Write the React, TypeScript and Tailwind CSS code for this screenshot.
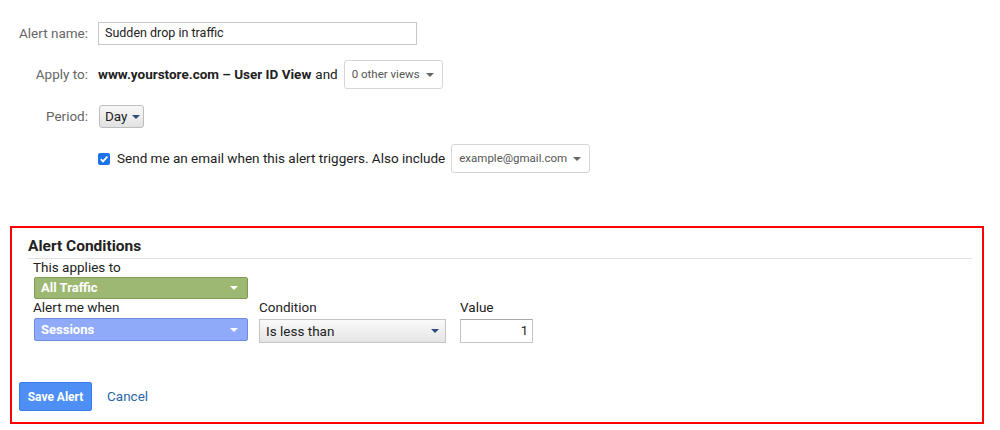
import React from 'react';

const font = { fontFamily: 'Roboto, "Liberation Sans", Arial, sans-serif' };

function Caret({ color = '#fff', size = 8 }: { color?: string; size?: number }) {
  return (
    <svg width={size} height={size / 2} viewBox="0 0 8 4" className="shrink-0">
      <path d="M0 0 L8 0 L4 4 Z" fill={color} />
    </svg>
  );
}

function Label({ children }: { children: React.ReactNode }) {
  return <div className="w-[88px] shrink-0 text-right text-[13.5px] text-[#666]">{children}</div>;
}

export default function App() {
  return (
    <div className="w-[1000px] h-[430px] bg-white overflow-hidden" style={font}>
      {/* top form */}
      <div className="pt-[22px]">
        <div className="flex items-center h-[23px] gap-[10px]">
          <Label>Alert name:</Label>
          <div className="w-[319px] h-[23px] border border-[#c8c8c8] flex items-center px-[6px] text-[12.5px] text-[#222]">
            Sudden drop in traffic
          </div>
        </div>

        <div className="flex items-center h-[29px] gap-[10px] mt-[15px]">
          <Label>Apply to:</Label>
          <div className="flex items-center text-[13.5px] text-[#222]">
            <span className="font-bold">www.yourstore.com – User ID View</span>
            <span className="ml-[4px]">and</span>
            <div className="ml-[6px] w-[99px] h-[29px] border border-[#d6d6d6] rounded-[3px] flex items-center justify-between pl-[7px] pr-[8px] text-[11.5px] text-[#555]">
              <span>0 other views</span>
              <Caret color="#666" size={8} />
            </div>
          </div>
        </div>

        <div className="flex items-center h-[23px] gap-[10px] mt-[16px]">
          <Label>Period:</Label>
          <div className="w-[45px] h-[23px] border border-[#bdbdbd] rounded-[3px] bg-gradient-to-b from-[#f8f8f8] to-[#e2e2e2] flex items-center gap-[4px] pl-[5px] text-[13.5px] text-[#222] ml-[1px]">
            <span>Day</span>
            <Caret color="#2b4a7d" size={8} />
          </div>
        </div>

        <div className="flex items-center h-[29px] gap-[10px] mt-[16px]">
          <div className="w-[88px] shrink-0" />
          <div className="flex items-center text-[13.5px] text-[#222]">
            <span className="w-[12px] h-[12px] rounded-[2px] bg-[#1a73e8] flex items-center justify-center">
              <svg width="10" height="10" viewBox="0 0 10 10">
                <path d="M1.8 5.2 L4 7.4 L8.4 2.6" stroke="#fff" strokeWidth="1.8" fill="none" />
              </svg>
            </span>
            <span className="ml-[7px]">Send me an email when this alert triggers. Also include</span>
            <div className="ml-[6px] w-[139px] h-[29px] border border-[#d6d6d6] rounded-[3px] flex items-center justify-between pl-[7px] pr-[8px] text-[11.5px] text-[#555]">
              <span>example@gmail.com</span>
              <Caret color="#666" size={8} />
            </div>
          </div>
        </div>
      </div>

      {/* alert conditions box */}
      <div className="ml-[10px] w-[974px] mt-[53px] h-[198px] border-2 border-[#ff0000]">
        <div className="ml-[16px] mr-[10px] mt-[9px] pb-[3px] border-b border-[#e2e2e2]">
          <div className="text-[15.5px] font-bold text-[#222] leading-[18px]">Alert Conditions</div>
        </div>
        <div className="pl-[22px]">
          <div className="text-[13.5px] text-[#222] leading-[17px] -ml-[1px]">This applies to</div>
          <div className="mt-[1px] w-[214px] h-[22px] bg-[#9db872] border border-[#7f9c56] rounded-[2px] flex items-center justify-between pl-[6px] pr-[9px] text-white font-bold text-[13px]">
            <span>All Traffic</span>
            <Caret />
          </div>
          <div className="flex">
            <div className="w-[225px]">
              <div className="text-[13.5px] text-[#222] leading-[17px] -ml-[1px]">Alert me when</div>
              <div className="mt-[2px] w-[214px] h-[23px] bg-[#8eaaf8] border border-[#6d8de0] rounded-[2px] flex items-center justify-between pl-[6px] pr-[9px] text-white font-bold text-[13px]">
                <span>Sessions</span>
                <Caret />
              </div>
            </div>
            <div className="w-[201px]">
              <div className="text-[13.5px] text-[#222] leading-[17px]">Condition</div>
              <div className="mt-[3px] w-[187px] h-[24px] border border-[#c4c4c4] bg-gradient-to-b from-[#fafafa] to-[#e4e4e4] flex items-center justify-between pl-[6px] pr-[6px] text-[13.5px] text-[#222]">
                <span>Is less than</span>
                <Caret color="#2b4a7d" size={8} />
              </div>
            </div>
            <div>
              <div className="text-[13.5px] text-[#222] leading-[17px]">Value</div>
              <div className="mt-[3px] w-[73px] h-[24px] border border-[#c4c4c4] border-t-[#a9a9a9] flex items-center justify-end pr-[4px] text-[13px] text-[#222]">
                1
              </div>
            </div>
          </div>
        </div>
        <div className="flex items-center pl-[7px] mt-[39px]">
          <div className="w-[73px] h-[29px] bg-[#4d8ff4] border border-[#3b7de8] rounded-[2px] flex items-center justify-center text-white font-bold text-[12px]">
            Save Alert
          </div>
          <span className="ml-[15px] text-[13.5px] text-[#2a64a8]">Cancel</span>
        </div>
      </div>
    </div>
  );
}
